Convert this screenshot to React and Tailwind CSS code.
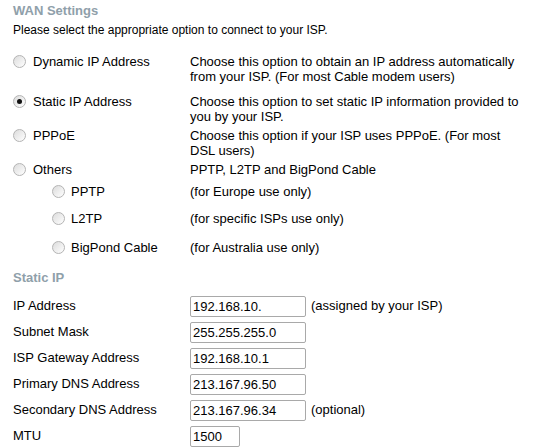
import React from 'react';

const Radio = ({ checked = false }) => (
  <span className="flex h-[13px] w-[13px] shrink-0 items-center justify-center rounded-full border border-[#b4b4b4] bg-gradient-to-br from-[#dcdcdc] to-white">
    {checked && <span className="h-[5px] w-[5px] rounded-full bg-[#111]" />}
  </span>
);

const OptionRow = ({ label, desc, checked, sub, className = '' }) => (
  <div className={`flex leading-[15px] ${className}`}>
    <div className={`flex w-[177px] shrink-0 items-start ${sub ? 'pl-[39px] gap-[6px]' : 'gap-[7px]'}`}>
      <span className="mt-[1px]"><Radio checked={checked} /></span>
      <span>{label}</span>
    </div>
    <div className="w-[345px] whitespace-nowrap">{desc}</div>
  </div>
);

const Field = ({ label, value, note, narrow }) => (
  <div className="flex h-[26px] items-center">
    <div className="w-[177px] shrink-0">{label}</div>
    <input
      defaultValue={value}
      readOnly
      className={`h-[21px] ${narrow ? 'w-[50px]' : 'w-[116px]'} rounded-[2px] border border-[#a9a9a9] bg-white px-[2px] text-[13px] text-black outline-none`}
    />
    {note && <span className="ml-[5px]">{note}</span>}
  </div>
);

export default function App() {
  return (
    <div className="min-h-[448px] w-[546px] bg-white pl-[13px] font-['Liberation_Sans',Arial,sans-serif] text-[13px] text-black">
      <div className="pt-[3px] text-[13px] font-bold leading-[15px] text-[#8fa0aa]">WAN Settings</div>
      <div className="mt-[5px] text-[12px] leading-[15px]">Please select the appropriate option to connect to your ISP.</div>

      <OptionRow
        className="mt-[16px]"
        label="Dynamic IP Address"
        desc={<>Choose this option to obtain an IP address automatically<br />from your ISP. (For most Cable modem users)</>}
      />
      <OptionRow
        className="mt-[10px]"
        checked
        label="Static IP Address"
        desc={<>Choose this option to set static IP information provided to<br />you by your ISP.</>}
      />
      <OptionRow
        className="mt-[4px]"
        label="PPPoE"
        desc={<>Choose this option if your ISP uses PPPoE. (For most<br />DSL users)</>}
      />
      <OptionRow className="mt-[4px]" label="Others" desc="PPTP, L2TP and BigPond Cable" />
      <OptionRow className="mt-[7px]" sub label="PPTP" desc="(for Europe use only)" />
      <OptionRow className="mt-[12px]" sub label="L2TP" desc="(for specific ISPs use only)" />
      <OptionRow className="mt-[14px]" sub label="BigPond Cable" desc="(for Australia use only)" />

      <div className="mt-[15px] text-[13px] font-bold leading-[15px] text-[#8fa0aa]">Static IP</div>

      <div className="mt-[8px]">
        <Field label="IP Address" value="192.168.10." note="(assigned by your ISP)" />
        <Field label="Subnet Mask" value="255.255.255.0" />
        <Field label="ISP Gateway Address" value="192.168.10.1" />
        <Field label="Primary DNS Address" value="213.167.96.50" />
        <Field label="Secondary DNS Address" value="213.167.96.34" note="(optional)" />
        <Field label="MTU" value="1500" narrow />
      </div>
    </div>
  );
}
